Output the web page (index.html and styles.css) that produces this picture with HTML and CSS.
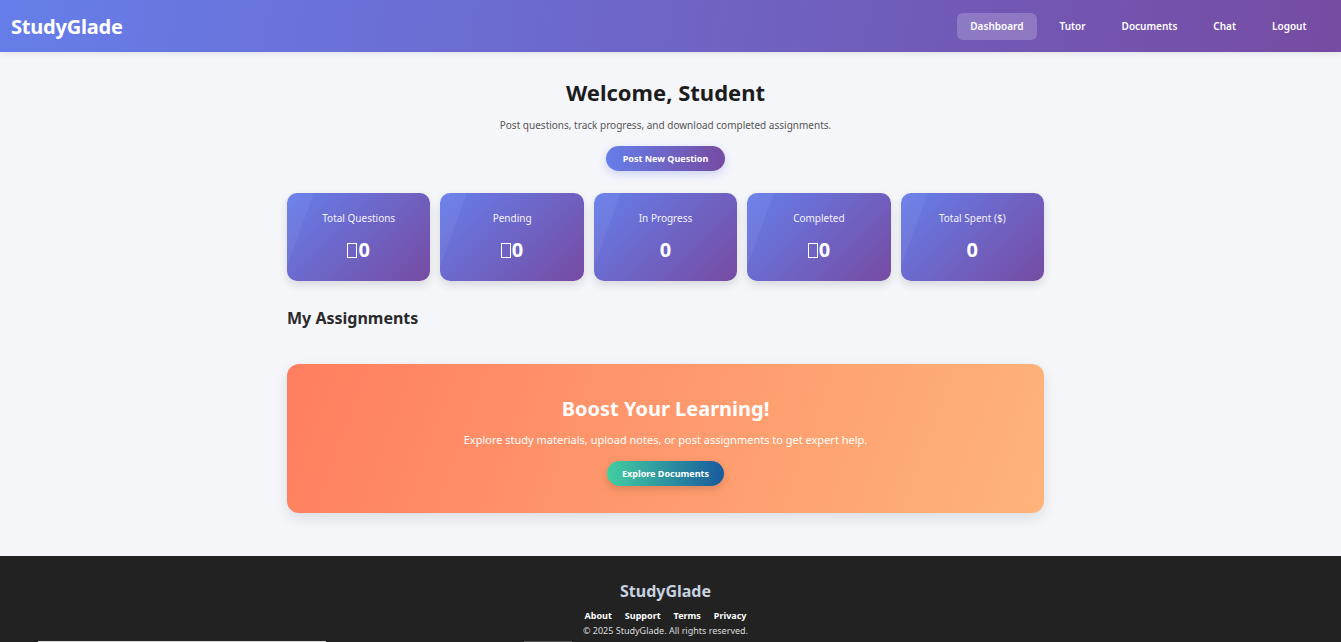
FILE: index.html
```html
<!DOCTYPE html>
<html lang="en">
<head>
<meta charset="utf-8">
<title>StudyGlade - Dashboard</title>
<link rel="stylesheet" href="styles.css">
</head>
<body>
<header class="topbar">
  <div class="brand">StudyGlade</div>
  <nav class="nav">
    <a class="nav-link active" href="#">Dashboard</a>
    <a class="nav-link" href="#">Tutor</a>
    <a class="nav-link" href="#">Documents</a>
    <a class="nav-link" href="#">Chat</a>
    <a class="nav-link" href="#">Logout</a>
  </nav>
</header>

<main class="main-wrap">
  <div class="container">
    <section class="welcome">
      <h1 class="welcome-title">Welcome, Student</h1>
      <p class="welcome-sub">Post questions, track progress, and download completed assignments.</p>
      <a class="btn btn-primary" href="#">Post New Question</a>
    </section>

    <section class="stats">
      <div class="stat-card"><div class="stat-label">Total Questions</div><div class="stat-value"><span class="tofu"></span>0</div></div>
      <div class="stat-card"><div class="stat-label">Pending</div><div class="stat-value"><span class="tofu"></span>0</div></div>
      <div class="stat-card"><div class="stat-label">In Progress</div><div class="stat-value">0</div></div>
      <div class="stat-card"><div class="stat-label">Completed</div><div class="stat-value"><span class="tofu"></span>0</div></div>
      <div class="stat-card"><div class="stat-label">Total Spent ($)</div><div class="stat-value">0</div></div>
    </section>

    <h2 class="section-title">My Assignments</h2>

    <section class="promo">
      <h2 class="promo-title">Boost Your Learning!</h2>
      <p class="promo-sub">Explore study materials, upload notes, or post assignments to get expert help.</p>
      <a class="btn btn-teal" href="#">Explore Documents</a>
    </section>
  </div>
</main>

<footer class="footer">
  <div class="footer-inner">
    <div class="footer-brand">StudyGlade</div>
    <div class="footer-links">
      <a href="#">About</a>
      <a href="#">Support</a>
      <a href="#">Terms</a>
      <a href="#">Privacy</a>
    </div>
    <div class="footer-copy">&copy; 2025 StudyGlade. All rights reserved.</div>
  </div>
  <div class="footer-edge">
    <span class="edge-light"></span>
    <span class="edge-dark"></span>
  </div>
</footer>
</body>
</html>
```

FILE: styles.css
```css
* { box-sizing: border-box; }

html, body {
  margin: 0;
  padding: 0;
}

body {
  font-family: "Noto Sans", "Open Sans", Arial, sans-serif;
  background: #f5f6fa;
  color: #222;
}

a { text-decoration: none; color: inherit; }

.topbar {
  height: 52px;
  display: flex;
  align-items: center;
  justify-content: space-between;
  padding: 0 21px 0 11px;
  background: linear-gradient(100deg, #667eea 0%, #764ba2 100%);
  box-shadow: 0 2px 6px rgba(0, 0, 0, 0.08);
}

.brand {
  color: #fff;
  font-size: 20px;
  font-weight: 700;
  letter-spacing: -0.2px;
}

.nav {
  display: flex;
  gap: 9px;
}

.nav-link {
  color: #fff;
  font-size: 10px;
  font-weight: 600;
  padding: 0 13.5px;
  height: 27px;
  line-height: 27px;
  border-radius: 6px;
}

.nav-link.active {
  background: rgba(255, 255, 255, 0.2);
}

.main-wrap {
  padding: 0 10px 43px 0;
}

.container {
  max-width: 757px;
  margin: 0 auto;
}

.welcome {
  text-align: center;
  padding-top: 25px;
}

.welcome-title {
  margin: 0;
  font-size: 22px;
  font-weight: 700;
  color: #1c1c1c;
  line-height: 30px;
}

.welcome-sub {
  margin: 11px 0 13px;
  font-size: 10px;
  color: #555;
  line-height: 14px;
}

.btn {
  display: inline-block;
  color: #fff;
  font-weight: 700;
  font-size: 9px;
  height: 25px;
  line-height: 25px;
  padding: 0 17px;
  border-radius: 13px;
}

.btn-primary {
  background: linear-gradient(90deg, #667eea, #764ba2);
  box-shadow: 0 3px 8px rgba(102, 126, 234, 0.3);
}

.btn-teal {
  background: linear-gradient(90deg, #43cea2, #185a9d);
  box-shadow: 0 3px 8px rgba(0, 0, 0, 0.15);
  padding: 0 15px;
}

.stats {
  display: grid;
  grid-template-columns: repeat(5, 1fr);
  gap: 10px;
  margin-top: 22px;
}

.stat-card {
  position: relative;
  overflow: hidden;
  height: 88px;
  border-radius: 10px;
  background: linear-gradient(135deg, #667eea 0%, #764ba2 100%);
  box-shadow: 0 4px 10px rgba(0, 0, 0, 0.12);
  color: #fff;
  text-align: center;
  padding-top: 18px;
}

.stat-card::before {
  content: "";
  position: absolute;
  left: -46px;
  top: -40px;
  width: 60px;
  height: 140px;
  transform: rotate(20deg);
  background: rgba(255, 255, 255, 0.05);
}

.stat-label {
  font-size: 10px;
  line-height: 14px;
  opacity: 0.92;
}

.stat-value {
  margin-top: 13px;
  font-size: 20px;
  font-weight: 700;
  line-height: 24px;
  display: flex;
  justify-content: center;
  align-items: center;
}

.tofu {
  display: inline-block;
  width: 10px;
  height: 15px;
  border: 1.5px solid #fff;
  margin-right: 1px;
}

.section-title {
  margin: 25px 0 0;
  font-size: 16px;
  font-weight: 700;
  color: #2a2a2a;
  line-height: 24px;
}

.promo {
  margin-top: 34px;
  height: 149px;
  border-radius: 12px;
  background: linear-gradient(110deg, #ff7e5f 0%, #feb47b 100%);
  box-shadow: 0 5px 14px rgba(0, 0, 0, 0.1);
  text-align: center;
  color: #fff;
  padding-top: 32px;
}

.promo-title {
  margin: 0;
  font-size: 20px;
  font-weight: 700;
  line-height: 26px;
}

.promo-sub {
  margin: 10px 0 12px;
  font-size: 11px;
  line-height: 16px;
}

.footer {
  background: #222;
}

.footer-inner {
  text-align: center;
  padding: 24px 10px 0 0;
  height: 85px;
}

.footer-brand {
  color: #c8d3e0;
  font-size: 16px;
  font-weight: 700;
  line-height: 22px;
}

.footer-links {
  display: flex;
  justify-content: center;
  gap: 13px;
  margin-top: 7px;
  font-size: 9px;
  font-weight: 700;
  color: #fff;
  line-height: 14px;
}

.footer-copy {
  font-size: 9px;
  color: #ddd;
  line-height: 12px;
  margin-top: 2px;
}

.footer-edge {
  display: flex;
  height: 1px;
  padding-left: 38px;
}

.edge-light {
  width: 288px;
  background: #d8d8d8;
}

.edge-dark {
  width: 48px;
  margin-left: 198px;
  background: #555;
}
```
